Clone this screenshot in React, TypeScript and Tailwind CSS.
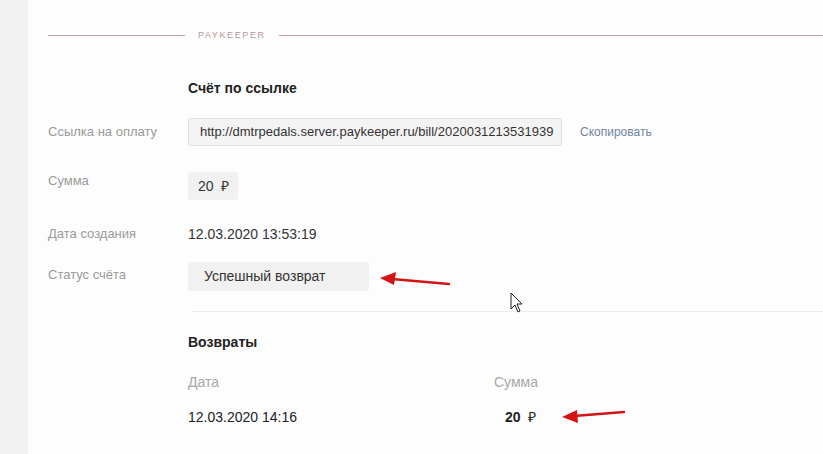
import React from "react";

const Label = ({ children, className = "" }: { children: React.ReactNode; className?: string }) => (
  <div className={`w-[140px] shrink-0 text-[13px] leading-[16px] text-[#9a9a9a] ${className}`}>{children}</div>
);

export default function App() {
  return (
    <div
      className="w-[823px] h-[454px] flex bg-[#f2f2f2] overflow-hidden"
      style={{ fontFamily: '"Liberation Sans", Arial, sans-serif' }}
    >
      <div className="w-[28px] shrink-0" />
      <div className="flex-1 bg-[#fdfdfd] relative flex flex-col">
        {/* divider */}
        <div className="mt-[29px] h-[12px] flex items-center pl-[20px]">
          <div className="w-[137px] h-px bg-[#c99ea2]" />
          <div className="mx-[13px] text-[9px] leading-[12px] tracking-[1.6px] text-[#b8979a]">PAYKEEPER</div>
          <div className="flex-1 h-px bg-[#c99ea2]" />
        </div>

        <div className="pl-[20px]">
          <div className="mt-[39px] pl-[140px] text-[14px] leading-[16px] font-bold text-[#222]">Счёт по ссылке</div>

          {/* link row */}
          <div className="mt-[22px] flex items-center h-[28px]">
            <Label>Ссылка на оплату</Label>
            <div className="h-[28px] w-[374px] rounded-[3px] border border-[#dedede] bg-[#f3f3f3] flex items-center pl-[11px] text-[13px] text-[#333] whitespace-nowrap overflow-hidden">
              http://dmtrpedals.server.paykeeper.ru/bill/2020031213531939
            </div>
            <div className="ml-[18px] text-[12px] text-[#6f85a0]">Скопировать</div>
          </div>

          {/* sum row */}
          <div className="mt-[26px] flex items-start">
            <Label className="pt-[1px]">Сумма</Label>
            <div className="h-[28px] w-[50px] rounded-[3px] bg-[#f1f1f1] flex items-center pl-[10px] text-[14px] text-[#333]">
              20&nbsp;&nbsp;₽
            </div>
          </div>

          {/* date row */}
          <div className="mt-[26px] flex items-start">
            <Label>Дата создания</Label>
            <div className="text-[14px] leading-[16px] text-[#333]">12.03.2020 13:53:19</div>
          </div>

          {/* status row */}
          <div className="mt-[20px] flex items-start">
            <Label className="pt-[5px]">Статус счёта</Label>
            <div className="h-[29px] w-[181px] rounded-[3px] bg-[#f1f1f1] flex items-center pl-[16px] text-[14px] text-[#333]">
              Успешный возврат
            </div>
          </div>
        </div>

        <div className="mt-[20px] ml-[164px] h-px bg-[#ececec]" />

        <div className="pl-[160px]">
          <div className="mt-[22px] text-[14px] leading-[16px] font-bold text-[#222]">Возвраты</div>
          <div className="mt-[24px] flex text-[14px] leading-[16px] text-[#a8a8a8]">
            <div className="w-[306px]">Дата</div>
            <div>Сумма</div>
          </div>
          <div className="mt-[19px] flex text-[14px] leading-[16px] text-[#222]">
            <div className="w-[317px]">12.03.2020 14:16</div>
            <div>
              <span className="font-bold">20</span>&nbsp;&nbsp;₽
            </div>
          </div>
        </div>

        {/* annotations overlay */}
        <svg className="absolute left-0 top-0 pointer-events-none" width="795" height="454" viewBox="28 0 795 454">
          <line x1="449" y1="284" x2="392" y2="279" stroke="#d41414" strokeWidth="2.5" strokeLinecap="round" />
          <polygon points="380,278 396,272 394,285" fill="#d41414" />
          <line x1="624" y1="412" x2="574" y2="416" stroke="#d41414" strokeWidth="2.5" strokeLinecap="round" />
          <polygon points="562,417 577,410 578,423" fill="#d41414" />
          <path d="M511 293 L511 309 L515 305 L518 312 L520 311 L517 304 L522 304 Z" fill="#fff" stroke="#222" strokeWidth="1" strokeLinejoin="round" />
        </svg>
      </div>
    </div>
  );
}
